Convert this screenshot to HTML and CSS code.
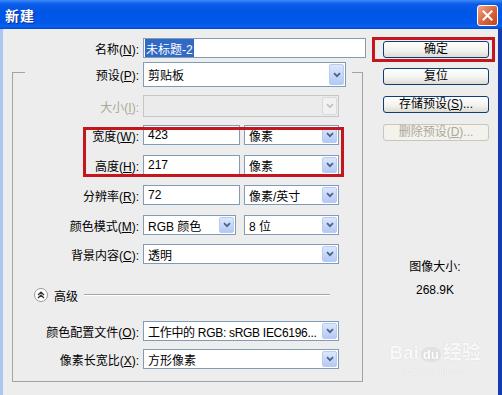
FILE: index.html
```html
<!DOCTYPE html>
<html lang="zh-CN">
<head>
<meta charset="UTF-8">
<meta name="viewport" content="width=device-width, initial-scale=1.0">
<title>新建</title>
<link rel="stylesheet" href="styles.css">
</head>
<body>

<div class="window">
  <!-- Title bar -->
  <div class="titlebar">
    <span class="title">新建</span>
    <span class="close">
      <svg width="11" height="11" viewBox="0 0 11 11"><path d="M1.5 1.5 L9.5 9.5 M9.5 1.5 L1.5 9.5" stroke="#fff" stroke-width="2" stroke-linecap="square"/></svg>
    </span>
  </div>

  <div class="body">
    <!-- Form column -->
    <div class="main">
      <div class="row name-row">
        <label class="lbl">名称(<u>N</u>):</label>
        <div class="field name-field"><span class="hilite">未标题-2</span></div>
      </div>

      <fieldset class="group">
        <legend class="legend">
          <div class="row">
            <label class="lbl">预设(<u>P</u>):</label>
            <div class="combo preset"><span class="val">剪贴板</span><span class="arrow"><svg width="8" height="6" viewBox="0 0 8 6"><path d="M1 1.2 L4 4.2 L7 1.2" fill="none" stroke="#4d6185" stroke-width="1.7"/></svg></span></div>
          </div>
        </legend>

        <div class="row size-row disabled">
          <label class="lbl">大小(<u>I</u>):</label>
          <div class="combo c-full size-combo"><span class="val"></span><span class="arrow"><svg width="8" height="6" viewBox="0 0 8 6"><path d="M1 1.2 L4 4.2 L7 1.2" fill="none" stroke="#c4c4c4" stroke-width="1.7"/></svg></span></div>
        </div>

        <div class="dims">
          <div class="row">
            <label class="lbl">宽度(<u>W</u>):</label>
            <div class="field c-short"><span class="val">423</span></div>
            <div class="combo c-unit"><span class="val">像素</span><span class="arrow"><svg width="8" height="6" viewBox="0 0 8 6"><path d="M1 1.2 L4 4.2 L7 1.2" fill="none" stroke="#4d6185" stroke-width="1.7"/></svg></span></div>
          </div>
          <div class="row step">
            <label class="lbl">高度(<u>H</u>):</label>
            <div class="field c-short"><span class="val">217</span></div>
            <div class="combo c-unit"><span class="val">像素</span><span class="arrow"><svg width="8" height="6" viewBox="0 0 8 6"><path d="M1 1.2 L4 4.2 L7 1.2" fill="none" stroke="#4d6185" stroke-width="1.7"/></svg></span></div>
          </div>
        </div>

        <div class="row step">
          <label class="lbl">分辨率(<u>R</u>):</label>
          <div class="field c-short"><span class="val">72</span></div>
          <div class="combo c-unit"><span class="val">像素/英寸</span><span class="arrow"><svg width="8" height="6" viewBox="0 0 8 6"><path d="M1 1.2 L4 4.2 L7 1.2" fill="none" stroke="#4d6185" stroke-width="1.7"/></svg></span></div>
        </div>

        <div class="row step">
          <label class="lbl">颜色模式(<u>M</u>):</label>
          <div class="combo c-mode"><span class="val">RGB 颜色</span><span class="arrow"><svg width="8" height="6" viewBox="0 0 8 6"><path d="M1 1.2 L4 4.2 L7 1.2" fill="none" stroke="#4d6185" stroke-width="1.7"/></svg></span></div>
          <div class="combo c-unit wide-gap"><span class="val">8 位</span><span class="arrow"><svg width="8" height="6" viewBox="0 0 8 6"><path d="M1 1.2 L4 4.2 L7 1.2" fill="none" stroke="#4d6185" stroke-width="1.7"/></svg></span></div>
        </div>

        <div class="row step-sm">
          <label class="lbl">背景内容(<u>C</u>):</label>
          <div class="combo c-full"><span class="val">透明</span><span class="arrow"><svg width="8" height="6" viewBox="0 0 8 6"><path d="M1 1.2 L4 4.2 L7 1.2" fill="none" stroke="#4d6185" stroke-width="1.7"/></svg></span></div>
        </div>

        <div class="advanced">
          <span class="adv-btn">
            <svg width="8" height="8" viewBox="0 0 8 8"><path d="M1 4 L4 1.2 L7 4 M1 7 L4 4.2 L7 7" fill="none" stroke="#333" stroke-width="1.4"/></svg>
          </span>
          <span class="adv-text">高级</span>
          <span class="adv-line"></span>
        </div>

        <div class="row profile-row">
          <label class="lbl">颜色配置文件(<u>O</u>):</label>
          <div class="combo c-full"><span class="val tight">工作中的 RGB: sRGB IEC6196...</span><span class="arrow"><svg width="8" height="6" viewBox="0 0 8 6"><path d="M1 1.2 L4 4.2 L7 1.2" fill="none" stroke="#4d6185" stroke-width="1.7"/></svg></span></div>
        </div>

        <div class="row aspect-row">
          <label class="lbl">像素长宽比(<u>X</u>):</label>
          <div class="combo c-full"><span class="val">方形像素</span><span class="arrow"><svg width="8" height="6" viewBox="0 0 8 6"><path d="M1 1.2 L4 4.2 L7 1.2" fill="none" stroke="#4d6185" stroke-width="1.7"/></svg></span></div>
        </div>
      </fieldset>
    </div>

    <!-- Buttons column -->
    <div class="side">
      <div class="ok-box"><button class="btn">确定</button></div>
      <button class="btn reset">复位</button>
      <button class="btn gap">存储预设(<u>S</u>)...</button>
      <button class="btn gap" disabled>删除预设(<u>D</u>)...</button>

      <div class="img-size">
        <div>图像大小:</div>
        <div class="img-kb">268.9K</div>
      </div>

      <div class="watermark">
        <div class="wm-logo">Bai<span class="paw">du</span>经验</div>
        <div class="wm-url">jingyan.baidu.com</div>
      </div>
    </div>
  </div>
</div>

</body>
</html>
```

FILE: styles.css
```css
/* Page */
body {
  margin: 0;
  background: #fff;
  font-family: "Liberation Sans", "Noto Sans CJK SC", sans-serif;
  font-size: 12px;
  color: #000;
}
.window {
  width: 502px;
  height: 395px;
  overflow: hidden;
}
/* Title bar */
.titlebar {
  height: 29px;
  box-sizing: border-box;
  padding: 0 4px 0 5px;
  display: flex;
  align-items: center;
  justify-content: space-between;
  background: linear-gradient(#3d8af7 0, #0b5ce9 14%, #0055e5 45%, #0058ea 80%, #0a62f0 90%, #0048d0 100%);
}
.title {
  color: #fff;
  font-weight: bold;
  font-size: 14px;
  letter-spacing: 1px;
  text-shadow: 1px 1px #0b2c8c;
  font-family: "Noto Sans CJK SC", sans-serif;
}
.close {
  width: 21px;
  height: 21px;
  box-sizing: border-box;
  margin-top: 2px;
  border: 1px solid #fff;
  border-radius: 3px;
  background: linear-gradient(135deg, #f0a58a, #d8633c 55%, #c4421f);
  display: flex;
  align-items: center;
  justify-content: center;
}
/* Dialog body */
.body {
  height: 366px;
  box-sizing: border-box;
  background: #ededed;
  border-left: 3px solid #a9c9f0;
  border-right: 4px solid #1639b4;
  padding-top: 8px;
  display: flex;
}
.main {
  width: 363px;
  padding: 1px 0 0 9px;
  box-sizing: border-box;
}
.row {
  display: flex;
  align-items: center;
  height: 20px;
}
.step {
  margin-top: 10px;
}
.step-sm {
  margin-top: 9px;
}
.lbl {
  width: 126px;
  margin-right: 4px;
  text-align: right;
  white-space: nowrap;
}
.name-row .lbl {
  width: 127px;
}
.disabled .lbl {
  color: #aca899;
}
/* Inputs and combos */
.field,
.combo {
  box-sizing: border-box;
  height: 20px;
  border: 1px solid #7f9db9;
  background: #fff;
  display: flex;
  align-items: center;
  padding-left: 4px;
  white-space: nowrap;
  overflow: hidden;
}
.combo {
  padding-right: 1px;
}
.val {
  flex: 1;
  overflow: hidden;
  white-space: nowrap;
}
.tight {
  letter-spacing: -0.3px;
}
.arrow {
  width: 15px;
  height: 16px;
  box-sizing: border-box;
  border: 1px solid #b7cbf3;
  border-radius: 2px;
  background: linear-gradient(#dce7fd, #b3c9f5);
  display: flex;
  align-items: center;
  justify-content: center;
  flex: none;
}
.name-field {
  width: 223px;
  padding-left: 1px;
}
.hilite {
  background: #316ac5;
  color: #fff;
  padding: 1px 1px;
}
.c-full { width: 196px; }
.c-short { width: 97px; }
.c-unit { width: 95px; margin-left: 4px; }
.c-mode { width: 93px; }
.c-unit.wide-gap { margin-left: 8px; }

.size-combo {
  height: 22px;
  background: #ebebeb;
  border-color: #c6c6c6;
}
.size-combo .arrow {
  height: 18px;
  background: #f1f1f1;
  border-color: #dadada;
}
/* Group box */
.group {
  margin: -1px 0 0 0;
  padding: 0 0 12px 0;
  width: 351px;
  box-sizing: border-box;
  border: 1px solid #a3a3a3;
  min-width: 0;
}
.legend {
  margin-left: 12px;
  padding: 5px 6px 0 0;
}
.legend .row {
  height: 25px;
}
.legend .lbl {
  width: 114px;
}
.preset {
  width: 203px;
  height: 25px;
}
.preset .arrow {
  height: 21px;
}
.size-row {
  height: 22px;
  margin-top: 8px;
}
.dims {
  position: relative;
  margin-top: 8px;
}
/* red annotation frame around width / height */
.dims::after {
  content: "";
  position: absolute;
  left: 70px;
  top: 2px;
  width: 261px;
  height: 50px;
  box-sizing: border-box;
  border: 3px solid #c4161c;
}
/* Advanced divider */
.advanced {
  display: flex;
  align-items: center;
  height: 14px;
  margin-top: 24px;
  padding-left: 21px;
  padding-right: 32px;
}
.adv-btn {
  width: 14px;
  height: 14px;
  box-sizing: border-box;
  border: 1px solid #9a9a9a;
  border-radius: 50%;
  background: #fff;
  display: flex;
  align-items: center;
  justify-content: center;
}
.adv-text {
  margin-left: 6px;
}
.adv-line {
  flex: 1;
  margin-left: 6px;
  border-top: 1px solid #a6a6a6;
  border-bottom: 1px solid #fff;
}
.profile-row {
  margin-top: 19px;
}
.aspect-row {
  margin-top: 8px;
}
/* Right column */
.side {
  width: 126px;
  margin-left: 6px;
}
.ok-box {
  width: 123px;
  box-sizing: border-box;
  border: 3px solid #c4161c;
  padding: 1px 3px 1px 8px;
}
.btn {
  display: block;
  width: 106px;
  height: 17px;
  box-sizing: border-box;
  padding: 0;
  border: 1px solid #0e3d78;
  border-radius: 3px;
  background: linear-gradient(#ffffff, #f1f1ee 60%, #dcdbd3);
  font-family: inherit;
  font-size: 12px;
  line-height: 15px;
  color: #000;
  text-align: center;
}
.ok-box .btn {
  margin: 0;
}
.reset {
  margin: 6px 0 0 11px;
}
.gap {
  margin: 11px 0 0 11px;
}
.btn:disabled {
  color: #aca899;
  border-color: #c9c7ba;
  background: #f3f2ec;
}
.img-size {
  margin-top: 118px;
  text-align: center;
  line-height: 16px;
}
.img-kb {
  margin-top: 7px;
}
.watermark {
  margin-top: 44px;
  text-align: center;
  color: rgba(255, 255, 255, 0.9);
  text-shadow: 0 0 1px rgba(0, 0, 0, 0.15);
}
.wm-logo {
  font-size: 19px;
  font-weight: bold;
  line-height: 22px;
}
.paw {
  font-size: 13px;
  color: #fff;
  background: rgba(215, 215, 215, 0.5);
  border-radius: 8px;
  padding: 0 2px;
  margin: 0 2px;
}
.wm-url {
  font-size: 9px;
  line-height: 11px;
  font-family: "Liberation Serif", serif;
}
```
